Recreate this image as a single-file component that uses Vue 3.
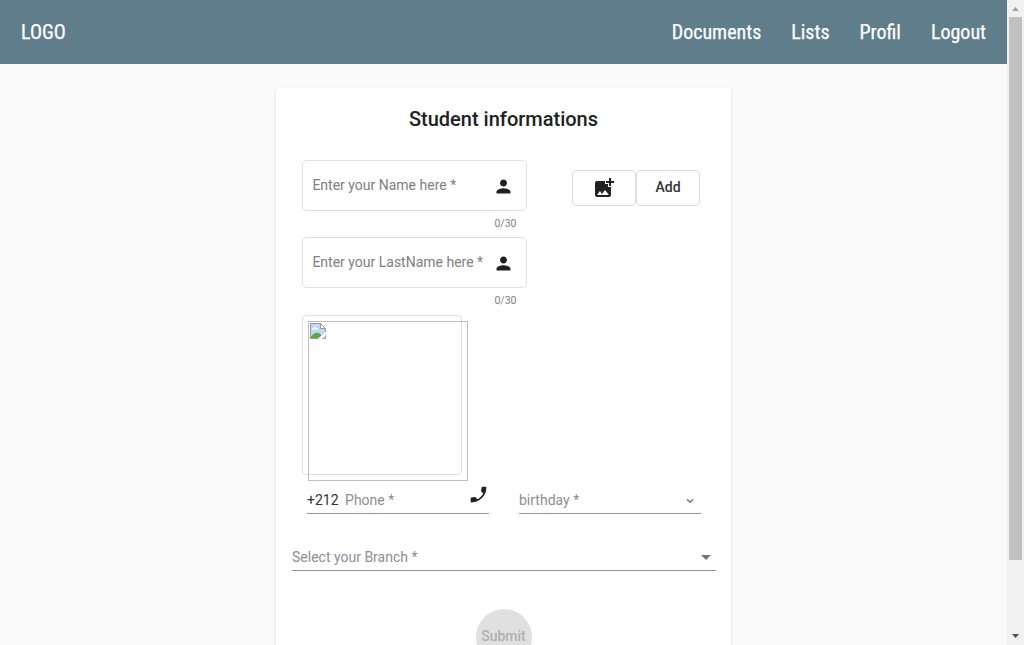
<script setup>
const links = ['Documents', 'Lists', 'Profil', 'Logout']
const nameFields = ['Enter your Name here *', 'Enter your LastName here *']
</script>

<template>
  <div class="window">
    <div class="page">
      <header class="toolbar">
        <span class="logo">LOGO</span>
        <nav><a v-for="link in links" :key="link">{{ link }}</a></nav>
      </header>
      <main class="card">
        <h1>Student informations</h1>
        <div class="top">
          <div class="names">
            <div v-for="label in nameFields" :key="label" class="field">
              <div class="outline">
                <span class="label">{{ label }}</span>
                <svg class="person" viewBox="0 0 24 24"><path d="M12 12c2.21 0 4-1.79 4-4s-1.79-4-4-4-4 1.79-4 4 1.79 4 4 4zm0 2c-2.67 0-8 1.34-8 4v2h16v-2c0-2.66-5.33-4-8-4z" /></svg>
              </div>
              <div class="hint">0/30</div>
            </div>
          </div>
          <div class="buttons">
            <button type="button" aria-label="Add photo">
              <svg class="photo" viewBox="0 0 24 24"><path d="M19 7v2.99s-1.99.01-2 0V7h-3s.01-1.99 0-2h3V2h2v3h3v2h-3zm-3 4V8h-3V5H5c-1.100 0-2 .9-2 2v12c0 1.100.9 2 2 2h12c1.100 0 2-.9 2-2v-8h-3zM5 19l3-4 2 3 3-4 4 5H5z" /></svg>
            </button>
            <button type="button" class="add">Add</button>
          </div>
        </div>
        <div class="preview">
          <div class="image">
            <svg class="broken" viewBox="0 0 16 16">
              <path d="M.5.5h10l5 5v10H.5z" fill="#c3d5f6" />
              <path d="M2 6.500h6c0-1-1-1.600-1.700-1.300C6 3.500 3.600 3.500 3.300 5 2.400 4.900 2 5.500 2 6.500z" fill="#fff" />
              <path d="M1 15v-1.500C3 11 5 9.800 7 9.800s4 1.500 5 3V15z" fill="#4fae3c" />
              <path d="M7.500 16L16 8.500V12l-4 4z" fill="#fff" />
              <path d="M8 15.500H.5V.5h10l5 5V9M12.500 15.500h3v-3" fill="none" stroke="#999" />
              <path d="M10.500.5v5h5z" fill="#fff" stroke="#999" />
            </svg>
          </div>
        </div>
        <div class="row">
          <div class="line phone">
            <span class="prefix">+212</span><span class="label">Phone *</span>
            <svg class="call" viewBox="0 0 24 24"><path d="M6.620 10.790c1.440 2.830 3.760 5.140 6.590 6.590l2.200-2.200c.27-.27.67-.36 1.020-.24 1.120.37 2.330.57 3.570.57.55 0 1 .45 1 1V20c0 .55-.45 1-1 1-9.390 0-17-7.610-17-17 0-.55.45-1 1-1h3.500c.55 0 1 .45 1 1 0 1.250.2 2.450.57 3.570.11.35.03.74-.25 1.020l-2.200 2.200z" /></svg>
          </div>
          <div class="line birthday">
            <span class="label">birthday *</span>
            <svg class="chevron" viewBox="0 0 8 6"><path d="M1 1.200l3 3 3-3" /></svg>
          </div>
        </div>
        <div class="line branch">
          <span class="label">Select your Branch *</span>
          <i class="caret"></i>
        </div>
        <button class="submit" type="button" disabled>Submit</button>
      </main>
    </div>
    <aside class="scrollbar">
      <svg viewBox="0 0 17 17"><path d="M5 11h7L8.500 7z" fill="#a3a3a3" /></svg>
      <div class="thumb"></div>
      <svg viewBox="0 0 17 17" class="down"><path d="M5 6h7L8.500 10z" fill="#505050" /></svg>
    </aside>
  </div>
</template>

<style>
body { overflow: hidden; }
</style>

<style scoped>
* { box-sizing: border-box; }
.window { display: flex; width: 1024px; height: 645px; overflow: hidden; font-family: Roboto, sans-serif; color: #212121; }
.page { width: 1007px; height: 645px; background: #fafafa; overflow: hidden; }
.toolbar { height: 64px; background: #607d8b; color: #fff; display: flex; align-items: center; justify-content: space-between; padding: 0 21px; font: 400 20px/28px "Roboto Condensed", Roboto, sans-serif; font-stretch: 75%; -webkit-text-stroke: .25px #fff; }
nav { display: flex; gap: 30px; }
.card { width: 455px; height: 650px; margin: 24px auto 0; padding: 16px 16px 0 16px; background: #fff; border-radius: 4px; box-shadow: 0 2px 1px -1px #0003, 0 1px 1px #00000024, 0 1px 3px #0000001f; }
h1 { margin: 0; height: 56px; text-align: center; font-size: 20px; line-height: 30px; font-weight: 500; }
.top { display: flex; height: 155px; padding-left: 10px; }
.field { width: 225px; height: 77px; }
.outline { height: 51px; border: 1px solid #e0e0e0; border-radius: 5px; display: flex; align-items: center; justify-content: space-between; padding: 0 12.500px 0 9.400px; }
.label { font-size: 14px; line-height: 20px; color: #808080; white-space: nowrap; font-weight: 400; }
.outline .label { margin-top: -1px; }
.person { width: 21px; height: 21px; margin-top: 2px; fill: #212121; }
.hint { margin: 6px 10.500px 0; text-align: right; font-size: 10.500px; line-height: 14px; color: #808080; }
.buttons { display: flex; margin: 10px 0 0 45px; }
.buttons button { width: 64px; height: 36px; padding: 0; border: 1px solid #e0e0e0; border-radius: 4px; background: #fff; color: #333; font: 500 14px/33px Roboto, sans-serif; }
.buttons .add { padding-bottom: 2px; line-height: 32px; }
.photo { width: 24px; height: 24px; display: block; margin: 0 auto; fill: #212121; }
.preview { width: 160px; height: 160px; margin-left: 10px; border: 1px solid #e0e0e0; border-radius: 4px; padding: 5px; }
.image { width: 160px; height: 160px; border: 1px solid #bdbdbd; padding: 1px; }
.broken { width: 16px; height: 16px; display: block; }
.row { display: flex; gap: 30px; padding-left: 15px; margin-top: 5px; height: 34px; }
.line { height: 34px; border-bottom: 1px solid #949494; display: flex; align-items: center; padding-top: 7px; }
.row .line { width: 182px; flex: none; }
.line .label { color: #8e8e8e; }
.prefix { font-size: 14px; line-height: 20px; margin-right: 6.500px; color: #333; }
.call { width: 21px; height: 21px; margin: -11px 0 0 auto; fill: #212121; transform: rotate(-90deg); }
.birthday { justify-content: space-between; padding-right: 7px; }
.chevron { width: 8px; height: 6px; margin-top: 2px; fill: none; stroke: #777; stroke-width: 1.400; }
.branch { width: 424px; margin-top: 23px; justify-content: space-between; padding-right: 5px; }
.caret { border: 5px solid transparent; border-top-color: #757575; border-bottom: 0; }
.submit { display: block; width: 56px; height: 56px; margin: 38px auto 0; padding: 0 0 2px; border: 0; border-radius: 50%; background: #e0e0e0; color: #b0b0b0; font: 500 14px/54px Roboto, sans-serif; }
.scrollbar { width: 17px; height: 645px; background: #f1f1f1; display: flex; flex-direction: column; }
.scrollbar svg { width: 17px; height: 17px; flex: none; }
.thumb { width: 13px; height: 543px; margin: 0 2px; background: #c1c1c1; }
.scrollbar .down { margin-top: auto; }
</style>
